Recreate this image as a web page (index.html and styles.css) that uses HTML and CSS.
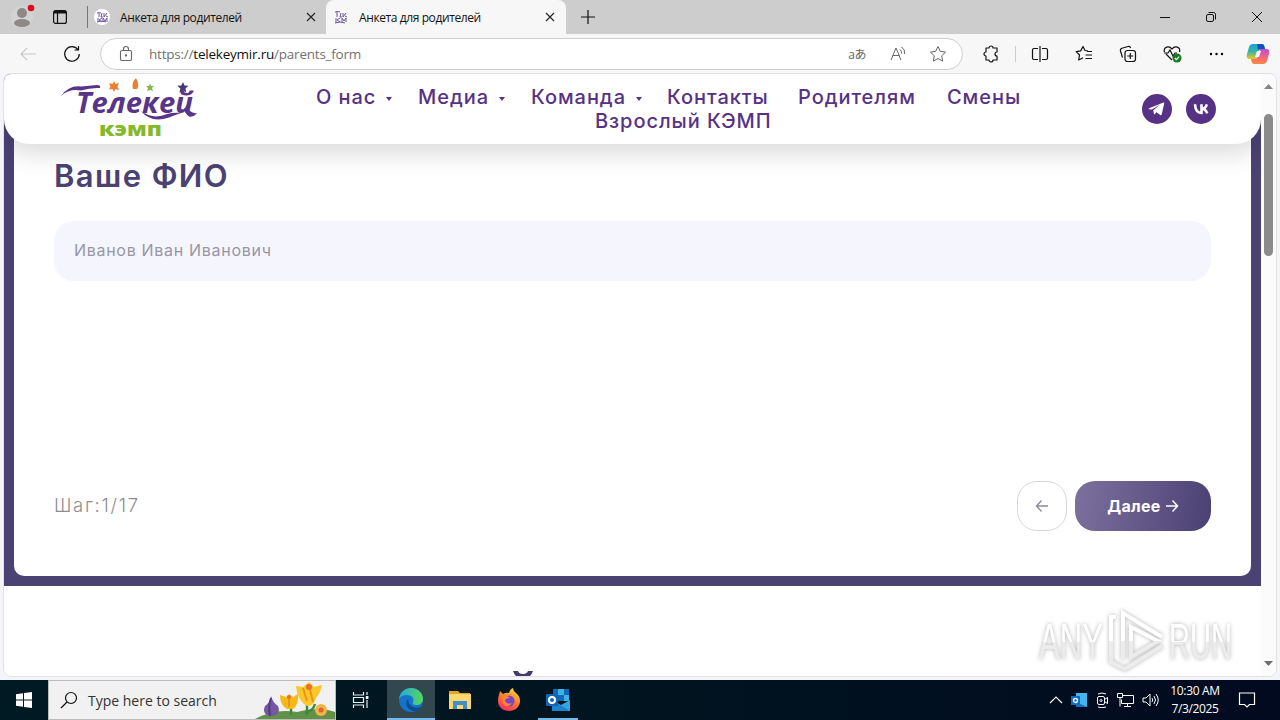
FILE: index.html
```html
<!DOCTYPE html>
<html lang="ru">
<head>
    <meta charset="UTF-8">
    <meta name="viewport" content="width=device-width, initial-scale=1.0">
    <title>Анкета для родителей</title>
    <link rel="stylesheet" href="styles.css">
</head>
<body>
    <!-- Tabs -->
    <div class="tabs-bar">
        <svg class="profile" width="28" height="28" viewBox="0 0 28 28">
            <circle cx="14" cy="14" r="11" fill="#d3d3d3"/>
            <circle cx="14" cy="10" r="5" fill="#8e8986"/>
            <ellipse cx="14" cy="20" rx="8" ry="4" fill="#8e8986"/>
            <circle cx="23" cy="5" r="3.3" fill="#e00b1c"/>
        </svg>
        <svg class="tab-actions" width="14" height="14" viewBox="0 0 14 14" fill="none" stroke="#111" stroke-width="1.2">
            <rect x="0.6" y="0.6" width="12.8" height="12.8" rx="2"/>
            <path d="M1 2.2h12" stroke-width="2.6"/>
            <path d="M4.500 3v10"/>
        </svg>
        <div class="tab">
            <svg class="favicon" width="16" height="16" viewBox="0 0 16 16">
                <circle cx="8" cy="8" r="8" fill="#fff"/>
                <path d="M3 4q3-1 4 0M5 4v4M8 4l-1 4h2M10 4v4l3-4M12 7l2 1M4 9v4M8 9l-3 2 3 2M9 13V9l2 3 2-3v4M3 13q5-2 9 0" fill="none" stroke="#6d57a2"/>
            </svg>
            <span class="tab-title">Анкета для родителей</span>
            <svg class="tab-close" width="10" height="10" viewBox="0 0 10 10"><path d="M1 1l8 8M9 1l-8 8" stroke="#222" stroke-width="1.1"/></svg>
        </div>
        <div class="tab active">
            <svg class="favicon" width="16" height="16" viewBox="0 0 16 16">
                <path d="M2 3q4-1 5 0M4 3v5M8 4l-1 4h2M10 4v4l3-4M12 7l2 1M3 9v5M7 9l-3 2 3 2M9 13V9l2 3 2-3v4M2 14q5-2 10 0" fill="none" stroke="#6d57a2"/>
            </svg>
            <span class="tab-title">Анкета для родителей</span>
            <svg class="tab-close" width="10" height="10" viewBox="0 0 10 10"><path d="M1 1l8 8M9 1l-8 8" stroke="#222" stroke-width="1.1"/></svg>
        </div>
        <svg class="new-tab" width="14" height="14" viewBox="0 0 14 14"><path d="M7 0v14M0 7h14" stroke="#111" stroke-width="1.2"/></svg>
        <div class="window-buttons">
            <svg width="12" height="12" viewBox="0 0 12 12"><path d="M1 6.5h10" stroke="#111"/></svg>
            <svg width="12" height="12" viewBox="0 0 12 12" fill="none" stroke="#111"><rect x="1.5" y="3.5" width="7" height="7" rx="1.5"/><path d="M3.5 1.5h5a2 2 0 0 1 2 2v5"/></svg>
            <svg width="12" height="12" viewBox="0 0 12 12"><path d="M1 1l10 10M11 1L1 11" stroke="#111"/></svg>
        </div>
    </div>

    <!-- Address bar -->
    <div class="toolbar">
        <svg class="back" width="16" height="14" viewBox="0 0 16 14" fill="none" stroke="#c8c8c8" stroke-width="1.1"><path d="M7 1L1 7l6 6M1 7h15"/></svg>
        <svg class="reload" width="18" height="18" viewBox="0 0 18 18" fill="none" stroke="#111" stroke-width="1.2"><path d="M14.800 4.500A7.300 7.300 0 1 0 16.300 9M15.500 1v4H11.500"/></svg>
        <div class="address">
            <svg width="14" height="17" viewBox="0 0 14 17" fill="none" stroke="#666" stroke-width="1.1"><rect x="1.5" y="5.5" width="11" height="10" rx="1.5"/><path d="M4.500 5.500V4a2.500 2.500 0 0 1 5 0v1.500"/><circle cx="7" cy="10.500" r=".6" fill="#666"/></svg>
            <span class="url">https://<b>telekeymir.ru</b>/parents_form</span>
            <span class="translate">aあ</span>
            <svg class="read" width="17" height="16" viewBox="0 0 17 16" fill="none" stroke="#666"><path d="M1 14L6 2l5 12M3 9.500h6.200M10 3.500q2 1.500 1.500 4M11.500 1q4 2.500 3 7"/></svg>
            <svg width="18" height="18" viewBox="0 0 18 18" fill="none" stroke="#666" stroke-linejoin="round"><path d="M9 1.500l2.300 4.900 5.300.7-3.900 3.700 1 5.300L9 13.500l-4.700 2.600 1-5.300L1.400 7.100l5.300-.7z"/></svg>
        </div>
        <div class="tools">
            <svg width="18" height="18" viewBox="0 0 18 18" fill="none" stroke="#111" stroke-width="1.2" stroke-linejoin="round"><path d="M4 3h3a2 2 0 0 1 4 0h4v4a2 2 0 0 0 0 4v4h-4a2 2 0 0 1-4 0H4v-4a2 2 0 1 1 0-4z"/></svg>
            <span class="divider"></span>
            <svg width="18" height="18" viewBox="0 0 18 18" fill="none" stroke="#111" stroke-width="1.2"><path d="M7 3.500H3A1.500 1.500 0 0 0 1.500 5v8A1.500 1.500 0 0 0 3 14.500h4M11 3.500h4A1.500 1.500 0 0 1 16.500 5v8a1.500 1.500 0 0 1-1.500 1.500h-4M9 1v16"/></svg>
            <svg width="18" height="18" viewBox="0 0 18 18" fill="none" stroke="#111" stroke-width="1.2" stroke-linejoin="round"><path d="M13 6l-3-.5-2-4-2.300 4.400-4.500.7 3.300 3.400-.8 5 4.300-2.300M12 6.500h5M10.500 10H17M10.500 13.500H17"/></svg>
            <svg width="18" height="18" viewBox="0 0 18 18" fill="none" stroke="#111" stroke-width="1.2"><rect x="6" y="5.5" width="10.5" height="11" rx="2.5"/><path d="M11.300 8v6M8.300 11h6M3.500 12.500L1.500 6Q1 4 3 3.200L9 1.500q2-.5 2.600 1.500"/></svg>
            <svg width="20" height="18" viewBox="0 0 20 18" fill="none" stroke="#111" stroke-width="1.2"><path d="M9 15L3 9M1.500 7C0 2 6 0 9 4c3-4 9-2 7.500 3M1 8h4l2-3 3 6 2-3h2"/><circle cx="14" cy="13" r="4.500" fill="#157c20" stroke="none"/><path d="M11.800 13l1.600 1.600 2.800-3" stroke="#fff"/></svg>
            <svg width="16" height="18" viewBox="0 0 16 18"><circle cx="2" cy="9" r="1.200"/><circle cx="7.500" cy="9" r="1.200"/><circle cx="13" cy="9" r="1.200"/></svg>
            <svg class="copilot" width="24" height="22" viewBox="0 0 24 22">
                <defs>
                    <linearGradient id="cp1" x1="0" y1="0" x2="0" y2="1"><stop offset="0" stop-color="#1d9fd8"/><stop offset=".5" stop-color="#35b6a5"/><stop offset="1" stop-color="#f0c91c"/></linearGradient>
                    <linearGradient id="cp2" x1="0" y1="0" x2="0" y2="1"><stop offset="0" stop-color="#b353db"/><stop offset=".5" stop-color="#f65f86"/><stop offset="1" stop-color="#f98b42"/></linearGradient>
                </defs>
                <path d="M7 1h9q2 0 2.500 3l.5 2h-4q-2 0-3 3l-2 7H4c-3 0-4-2-3-5l2-7q1-3 4-3z" fill="url(#cp1)"/>
                <path d="M11 1h5q2 0 2.500 3l.5 2h-4q-1.500 0-3 1z" fill="#1550b8"/>
                <path d="M17 21H8q-2 0-2.500-3L5 16h4q2 0 3-3l2-7h6c3 0 4 2 3 5l-2 7q-1 3-4 3z" fill="url(#cp2)"/>
                <path d="M11 8h4l-2 6H9z" fill="#f7f7f7"/>
            </svg>
        </div>
    </div>

    <!-- Page -->
    <div class="viewport">
        <div class="page">
            <header class="site-header">
                <svg class="logo" width="146" height="66" viewBox="0 0 146 66">
                    <path d="M2 19Q10 8 22 9.500l16-1.500q4 0 3 3-10-.5-19 2.500Q10 11.500 2 19z" fill="#583589"/>
                    <text x="17" y="36" class="logo-name" textLength="117" lengthAdjust="spacingAndGlyphs">Телекей</text>
                    <path d="M82 34q12 9 26 3 7-2 14-1-6 2-12 4.500-18 6-28-6.500z" fill="#583589"/>
                    <path d="M128 31q4 5 10 5.500-4 4-8 3-4-3-5-8z" fill="#583589"/>
                    <path d="M55 4l1.500 3 3.500-1-1.500 3.500L60 13l-3.500-1L55 15l-1.500-3-3.500.5 1.500-3L50 6l3.500 1z" fill="#ee7e32"/>
                    <path d="M77 1q4 7 1 11h-4q-2-6 3-11z" fill="#ee7e32"/>
                    <path d="M91 6l1 3 3 0-2 2 1 3-3-1-3 1 1-3-2-2 3 0z" fill="#85b94c"/>
                    <path d="M124 5l1.500 3.500 4 .3-3 2.700.8 4-3.300-2-3.500 2 .8-4-3-2.700 4-.3z" fill="#493879"/>
                    <text x="40" y="59" class="logo-camp" textLength="63" lengthAdjust="spacingAndGlyphs">кэмп</text>
                </svg>
                <nav class="menu">
                    <div class="menu-row">
                        <a class="drop">О нас</a>
                        <a class="drop">Медиа</a>
                        <a class="drop">Команда</a>
                        <a>Контакты</a>
                        <a>Родителям</a>
                        <a>Смены</a>
                    </div>
                    <a class="menu-last">Взрослый КЭМП</a>
                </nav>
                <div class="social">
                    <svg width="30" height="30" viewBox="0 0 30 30"><circle cx="15" cy="15" r="15" fill="#563286"/><path d="M7 14.300L21.500 8.500q1-.3.700 1l-2.500 11q-.4 1.300-1.500.5l-3.700-2.700-1.900 1.900q-.7.500-.8-.6l-.5-3.400 7-5.800-8.500 5.200L7 15.200q-.9-.5 0-.9z" fill="#fff"/></svg>
                    <svg width="30" height="30" viewBox="0 0 30 30"><circle cx="15" cy="15" r="15" fill="#563286"/><path d="M9 10.300q.5 8.700 6.500 8.700V10.300M15.500 15q4 0 5.300-4.700M15.500 14.500q4 .3 5.700 4.900" fill="none" stroke="#fff" stroke-width="2.600"/></svg>
                </div>
            </header>
            <section class="quiz">
                <div class="quiz-card">
                    <h2>Ваше ФИО</h2>
                    <div class="field"><span>Иванов Иван Иванович</span></div>
                    <div class="quiz-footer">
                        <span class="step">Шаг:1/17</span>
                        <button class="prev"><svg width="14" height="14" viewBox="0 0 14 14" fill="none" stroke="#8d879f" stroke-width="1.3"><path d="M6.500 1.500L1.500 7l5 5.500M1.500 7H13"/></svg></button>
                        <button class="next"><span>Далее</span><svg width="14" height="14" viewBox="0 0 14 14" fill="none" stroke="#fff" stroke-width="1.5"><path d="M7.500 1.500L12.500 7l-5 5.500M12.500 7H1"/></svg></button>
                    </div>
                </div>
            </section>
            <svg class="next-heading" width="20" height="6" viewBox="0 0 20 6"><path d="M0 0h5q1 3 5 3t5-3h5q-1 3-3 5H3Q1 3 0 0z" fill="#453c6b"/></svg>
        </div>
        <div class="scrollbar">
            <svg width="9" height="6" viewBox="0 0 9 6"><path d="M0 6l4.500-5L9 6z" fill="#858585"/></svg>
            <div class="thumb"></div>
            <svg class="down" width="9" height="6" viewBox="0 0 9 6"><path d="M0 0l4.500 5L9 0z" fill="#6d6d6d"/></svg>
        </div>
        <svg class="watermark" width="204" height="72" viewBox="0 0 204 72">
            <defs><linearGradient id="wm" x1="0" y1="0" x2="0" y2="1"><stop offset=".5" stop-color="#fff"/><stop offset=".5" stop-color="#ececec"/></linearGradient></defs>
            <text x="4" y="56" textLength="64" lengthAdjust="spacingAndGlyphs">ANY</text>
            <path d="M127 34L88 10v46M81 14h-5v45l14 7 37-23M96 24l27 14-27 16z" fill="none" stroke="url(#wm)" stroke-width="4"/>
            <text x="134" y="56" textLength="63" lengthAdjust="spacingAndGlyphs">RUN</text>
        </svg>
    </div>

    <!-- Taskbar -->
    <div class="taskbar">
        <div class="start"><svg width="16" height="16" viewBox="0 0 16 16" fill="#fff"><path d="M0 2.200l7-1v6.300H0zM8 1l8-1v7.500H8zM0 8.500h7v6.300l-7-1zM8 8.500h8V16l-8-1.100z"/></svg></div>
        <div class="search">
            <svg width="18" height="18" viewBox="0 0 18 18" fill="none" stroke="#111" stroke-width="1.2"><circle cx="11" cy="7" r="5.500"/><path d="M7 11l-6 6"/></svg>
            <span>Type here to search</span>
            <svg class="flowers" width="80" height="38" viewBox="0 0 80 38">
                <path d="M0 38Q20 27 42 31q22-6 38 0v7z" fill="#62914a"/>
                <path d="M36 34V22M52 34V18M50 32q8-2 10-9" stroke="#3b8b3c" stroke-width="2.5" fill="none"/>
                <path d="M16 15q2 7 7 10c3 7-2 10-7 10s-9-4-6-10q5-3 6-10z" fill="#7557a4"/>
                <path d="M16 17q-3 9-1 18" stroke="#543b83" stroke-width="2" fill="none"/>
                <path d="M25 14l6 2 3-3 4 3 5-3q1 11-5 15h-6q-7-4-7-14z" fill="#f6b91c"/>
                <path d="M41 5l7 1 6-5 5 5 8-2q-1 7-6 13-3 9-9 8-10-6-11-20z" fill="#fac72c"/>
                <path d="M54 4l4 17M48 7l4 13M34 15v11" stroke="#ed9418" stroke-width="2"/>
                <circle cx="54" cy="6" r="3" fill="#e77423"/><circle cx="34" cy="16" r="2" fill="#e77423"/>
                <circle cx="66" cy="29" r="6" fill="#f5b34c"/><circle cx="66" cy="29" r="2.500" fill="#de6528"/>
            </svg>
        </div>
        <div class="task"><svg width="18" height="18" viewBox="0 0 18 18" fill="none" stroke="#e8edef" stroke-width="1.2"><path d="M1.500 1v3h10V1M1.500 17v-3h10v3M1.500 6.500h10v5h-10zM15 1v3M15 9v8"/><path d="M13.800 5h2.600v3h-2.600z" fill="#fff" stroke="none"/></svg></div>
        <div class="task current">
            <svg width="26" height="26" viewBox="0 0 26 26">
                <defs><linearGradient id="edge" x1="0" y1="0" x2="1" y2="0"><stop offset="0" stop-color="#26a9df"/><stop offset="1" stop-color="#55d65e"/></linearGradient></defs>
                <circle cx="13" cy="13" r="12" fill="#1374c9"/>
                <path d="M1 12C2 5 7 1 13 1c8 0 12 6 12 11 0 4-3 6-7 6-3 0-4-1-3-3 2-4-2-7-6-7-4 0-7 2-8 4z" fill="url(#edge)"/>
                <path d="M10 12c-4 5 0 12 7 12 3 0 5-2 6-4-6 2-12 0-13-8z" fill="#114b8c"/>
            </svg>
        </div>
        <div class="task"><svg width="24" height="24" viewBox="0 0 24 24"><path d="M1 3h9l2 2h10v15H1z" fill="#e8a325"/><path d="M1 6h22v15H1z" fill="#fbd86d"/><path d="M5 13h14v8h-4v-4H9v4H5z" fill="#3f8fcc"/></svg></div>
        <div class="task">
            <svg width="24" height="24" viewBox="0 0 24 24">
                <defs><linearGradient id="fox" x1=".8" y1="0" x2=".3" y2="1"><stop offset="0" stop-color="#ffe03b"/><stop offset=".5" stop-color="#ff7b2d"/><stop offset="1" stop-color="#f32c63"/></linearGradient></defs>
                <path d="M3 3l3 3q3-2 6-1 1-4 4-5 0 3 3 5 4 3 4 8c0 6-5 10-11 10S1 19 1 13c0-4 1-6 2-10z" fill="url(#fox)"/>
                <circle cx="12" cy="13" r="5.500" fill="#7744cc"/><path d="M5 9q4-3 8 1-5 0-5 3 2 4 7 2-4 6-9 1z" fill="#ff8530"/>
            </svg>
        </div>
        <div class="task open">
            <svg width="26" height="24" viewBox="0 0 26 24"><path d="M8 1h16v12H8z" fill="#1268b4"/><path d="M13 1h6v6h-6zM19 7h5v6h-5z" fill="#3fb2ee"/><path d="M7 12l9 5 9-5v11H7z" fill="#35a5e3"/><path d="M7 12l18 11H7z" fill="#1c84cf"/><rect x="1" y="6" width="12" height="12" rx="1" fill="#0f66b8"/><circle cx="7" cy="12" r="3" fill="none" stroke="#fff" stroke-width="2"/></svg>
        </div>
        <div class="tray">
            <svg width="14" height="14" viewBox="0 0 14 14" fill="none" stroke="#fff" stroke-width="1.2"><path d="M1 10l6-6 6 6"/></svg>
            <svg width="16" height="16" viewBox="0 0 16 16"><path d="M5 1h11v14H5z" fill="#40b5ee"/><path d="M5 10l11 5H5z" fill="#1670bd"/><rect y="4" width="9" height="9" fill="#0f6bbd"/><circle cx="4.500" cy="8.500" r="2" fill="none" stroke="#fff" stroke-width="1.3"/></svg>
            <svg width="14" height="16" viewBox="0 0 14 16" fill="none" stroke="#fff"><rect x="2.500" y="4.500" width="7" height="8" rx="1.500"/><path d="M9.500 7.500l3-2v6l-3-2M3 2q4-2 8 0M3 15q4 1.500 8 0"/><circle cx="6" cy="8.500" r="1"/></svg>
            <svg width="17" height="16" viewBox="0 0 17 16" fill="none" stroke="#fff"><path d="M6 3.500h10.500v8H4.500v-4M10.500 11.500v3M7 14.500h7M.5 1.500h5v4h-5zM3 5.500v9"/></svg>
            <svg width="18" height="16" viewBox="0 0 18 16" fill="none" stroke="#fff"><path d="M1 6h3l4-4v12l-4-4H1zM10 6q1.500 2 0 4M12 4q3 4 0 8M14 2q4.500 6 0 12"/></svg>
        </div>
        <div class="clock"><span>10:30 AM</span><span>7/3/2025</span></div>
        <svg class="notify" width="18" height="18" viewBox="0 0 18 18" fill="none" stroke="#fff" stroke-width="1.2"><path d="M1.500 2h15v11.500h-5L9 16l-2.500-2.500h-5z"/></svg>
    </div>
</body>
</html>
```
FILE: styles.css
```css
* {
    box-sizing: border-box;
}
body {
    margin: 0;
    width: 1280px;
    height: 720px;
    overflow: hidden;
    display: flex;
    flex-direction: column;
    background: #f3f5f8;
    font-family: "Open Sans", "Noto Sans CJK JP", sans-serif;
}
svg {
    display: block;
    flex: none;
}
span, a {
    white-space: nowrap;
}

/* tabs */
.tabs-bar {
    height: 34px;
    flex: none;
    display: flex;
    align-items: center;
    background: #cdcdcd;
}
.profile {
    margin-left: 8px;
}
.tab-actions {
    margin: 0 20px 0 17px;
}
.tab {
    display: flex;
    align-items: center;
    width: 239px;
    height: 22px;
    padding-left: 6px;
    border-left: 1px solid #777;
}
.tab-title {
    width: 186px;
    margin-left: 10px;
    font-size: 12px;
    letter-spacing: -0.4px;
    color: #111;
}
.tab.active {
    height: 34px;
    width: 240px;
    padding-left: 7px;
    border: 0;
    border-radius: 8px 8px 0 0;
    background: #f7f7f7;
}
.new-tab {
    margin-left: 15px;
}
.window-buttons {
    display: flex;
    gap: 34px;
    margin: 0 17px 0 auto;
}

/* toolbar */
.toolbar {
    height: 39px;
    flex: none;
    display: flex;
    align-items: center;
    background: #f7f7f7;
}
.back {
    margin-left: 20px;
}
.reload {
    margin: 0 19px 0 27px;
}
.address {
    width: 863px;
    height: 32px;
    display: flex;
    align-items: center;
    padding: 0 15px 0 18px;
    background: #fff;
    border: 1px solid #cfcfcf;
    border-radius: 16px;
}
.url {
    margin-left: 16px;
    font-size: 13.5px;
    letter-spacing: -0.22px;
    color: #727272;
}
.url b {
    font-weight: 400;
    color: #111;
}
.translate {
    margin-left: auto;
    font-size: 12px;
    letter-spacing: -0.5px;
    color: #666;
}
.read {
    margin: 0 22px 0 24px;
}
.tools {
    flex: 1;
    display: flex;
    align-items: center;
    gap: 26px;
    padding-left: 19px;
}
.divider {
    width: 1px;
    height: 16px;
    margin: 0 -11px;
    background: #ccc;
}
.copilot {
    margin-left: -5px;
}

/* page */
.viewport {
    position: relative;
    width: 1274px;
    height: 604px;
    margin: 0 3px;
    display: flex;
    flex: none;
    border: 1px solid #e2e2e2;
    border-radius: 8px;
    overflow: hidden;
    background: #fff;
}
.page {
    position: relative;
    width: 1257px;
    flex: none;
    overflow: hidden;
    font-family: Inter, "Open Sans", sans-serif;
}
.site-header {
    position: absolute;
    top: 0;
    left: 0;
    width: 1257px;
    height: 70px;
    display: flex;
    background: #fff;
    border-radius: 0 0 25px 25px;
    box-shadow: 0 10px 25px rgba(0, 0, 0, 0.14);
}
.logo {
    margin: 3px 0 0 55px;
}
.logo-name {
    font: italic 700 29px "Open Sans", sans-serif;
    fill: #583589;
}
.logo-camp {
    font: 800 20px "Open Sans", sans-serif;
    fill: #85b928;
}
.menu {
    width: 750px;
    margin: 11px 0 0 111px;
    font-size: 20px;
    font-weight: 550;
    line-height: 24px;
    letter-spacing: 0.95px;
    color: #563286;
}
.menu-row {
    display: grid;
    grid-template-columns: 102px 113px 136px 131px 149px 74px;
}
.menu a {
    display: flex;
    align-items: center;
}
.drop::after {
    content: "";
    margin: 3px 0 0 10px;
    border: 3.5px solid transparent;
    border-top: 4px solid #563286;
    border-bottom: 0;
}
.menu .menu-last {
    margin-left: 279px;
}
.social {
    display: flex;
    gap: 14px;
    margin: 20px 0 0 76px;
}
.quiz {
    height: 512px;
    padding: 0 10px 10px;
    background: #4b4274;
}
.quiz-card {
    height: 502px;
    padding: 84px 40px 0;
    background: #fff;
    border-radius: 0 0 10px 10px;
}
.quiz-card h2 {
    margin: 0;
    font-size: 31px;
    line-height: 36px;
    font-weight: 600;
    letter-spacing: 1.4px;
    color: #4b4274;
}
.field {
    height: 60px;
    margin-top: 27px;
    padding: 0 0 2px 20px;
    display: flex;
    align-items: center;
    border-radius: 20px;
    background: #f5f5fd;
    color: #9895a5;
    font-size: 16px;
    letter-spacing: 0.7px;
}
.quiz-footer {
    display: flex;
    align-items: center;
    margin-top: 200px;
}
.step {
    margin: -3px auto 0 0;
    font-size: 18.5px;
    font-weight: 300;
    letter-spacing: 1.7px;
    color: #8e8e8e;
}
.quiz button {
    height: 50px;
    display: flex;
    align-items: center;
    justify-content: center;
    padding: 0;
    border-radius: 20px;
}
.prev {
    width: 50px;
    margin-right: 8px;
    background: #fff;
    border: 1px solid #d8d7df;
}
.next {
    width: 136px;
    gap: 4px;
    border: 0;
    background: linear-gradient(100deg, #7c719e, #4b4073);
    color: #fff;
    font: 700 16px Inter, sans-serif;
    letter-spacing: 0.3px;
}
.next-heading {
    margin: 85px 0 0 509px;
}
.scrollbar {
    width: 15px;
    height: 603px;
    display: flex;
    flex-direction: column;
    align-items: center;
    padding: 9px 0 10px;
    background: #fbfbfb;
}
.thumb {
    width: 9px;
    height: 142px;
    margin-top: 25px;
    border-radius: 5px;
    background: #8b8b8b;
}
.down {
    margin-top: auto;
}
.watermark {
    position: absolute;
    right: 37px;
    bottom: 1px;
    filter: drop-shadow(0 0 2px rgba(0, 0, 0, 0.3));
}
.watermark text {
    font: 50px "Liberation Sans", sans-serif;
    fill: url(#wm);
}

/* taskbar */
.taskbar {
    height: 40px;
    flex: none;
    margin-top: auto;
    display: flex;
    align-items: center;
    background: linear-gradient(90deg, #001a23, #00141f 50%, #020a20);
}
.start {
    width: 48px;
    padding-left: 16px;
}
.search {
    width: 288px;
    height: 40px;
    display: flex;
    align-items: center;
    padding-left: 11px;
    background: #f1f1f1;
    border: 1px solid #bbb;
    font-size: 14px;
    color: #333;
}
.search span {
    margin-left: 10px;
}
.flowers {
    margin-left: auto;
}
.task {
    width: 49px;
    height: 40px;
    flex: none;
    display: flex;
    align-items: center;
    justify-content: center;
}
.current {
    width: 48px;
    margin: 0 0 0 2px;
    background: #33474f;
    border-bottom: 2px solid #76b9ed;
    padding-top: 2px;
}
.open {
    background: linear-gradient(#76b9ed, #76b9ed) center bottom / 40px 2px no-repeat;
}
.tray {
    margin-left: auto;
    display: flex;
    align-items: center;
    gap: 8px;
}
.clock {
    width: 70px;
    display: flex;
    flex-direction: column;
    align-items: center;
    font-size: 12px;
    line-height: 18px;
    letter-spacing: -0.35px;
    color: #fff;
}
.notify {
    margin: 0 24px 0 8px;
}
```
